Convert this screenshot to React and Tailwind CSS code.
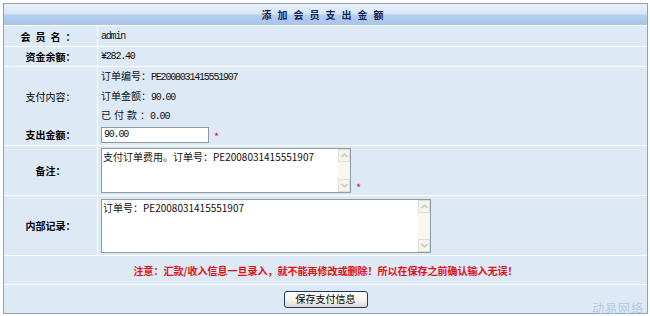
import React from 'react';

const cn = "font-['Noto_Sans_CJK_SC',sans-serif]";
const mono = "font-['Liberation_Mono',monospace] tracking-[-1.2px]";

// 禁用状态的滚动条（XP 风格）
function Scrollbar() {
  return (
    <div className="flex w-[12px] flex-col justify-between bg-[#f7f6f0]">
      <div className="flex h-[13px] items-center justify-center border border-[#e2e0d6] bg-[#f4f3ee]">
        <svg width="7" height="5" viewBox="0 0 7 5"><path d="M0.5 4 L3.5 1 L6.5 4" fill="none" stroke="#c3c1b8" strokeWidth="1.2" /></svg>
      </div>
      <div className="flex h-[13px] items-center justify-center border border-[#e2e0d6] bg-[#f4f3ee]">
        <svg width="7" height="5" viewBox="0 0 7 5"><path d="M0.5 1 L3.5 4 L6.5 1" fill="none" stroke="#c3c1b8" strokeWidth="1.2" /></svg>
      </div>
    </div>
  );
}

function Area({ value, className }) {
  return (
    <div className={`flex border border-[#8d99a5] bg-white ${className}`}>
      <textarea
        readOnly
        defaultValue={value}
        className={`flex-1 resize-none overflow-hidden bg-white px-[1px] py-[1px] text-[10px] leading-[13px] text-[#111] outline-none ${cn}`}
      />
      <Scrollbar />
    </div>
  );
}

function Row({ label, bold = true, h, children }) {
  return (
    <div className="grid grid-cols-[93px_1fr] gap-px" style={{ height: h }}>
      <div className={`flex items-center justify-center bg-[#dde9f5] text-[10px] text-black ${bold ? 'font-bold' : ''}`}>
        {label}
      </div>
      <div className="flex items-center bg-[#dde9f5] pl-[3px] text-[10px] text-[#111]">{children}</div>
    </div>
  );
}

export default function App() {
  return (
    <div className={`relative h-[316px] w-[650px] bg-white pt-[3px] pl-[3px] ${cn}`}>
      <div className="flex w-[645px] flex-col gap-px border border-[#8fa2b6] bg-white">
        <div className="flex h-[21px] items-center justify-center bg-[linear-gradient(to_bottom,#eaf2fb_0%,#d8e6f6_45%,#b4cef0_55%,#a8c5ec_100%)]">
          <span className="text-[10px] font-bold tracking-[6px] text-[#14285a]">添加会员支出金额</span>
        </div>

        <Row label={<span className="tracking-[5px]">会员名：</span>} h={20}>
          <span className={mono}>admin</span>
        </Row>
        <Row label="资金余额：" h={19}>
          <span className={mono}>¥282.40</span>
        </Row>
        <Row label="支付内容：" bold={false} h={56}>
          <div className="flex flex-col leading-[17.5px]">
            <div>订单编号：<span className={mono}>PE2008031415551907</span></div>
            <div>订单金额：<span className={mono}>90.00</span></div>
            <div><span className="tracking-[3px]">已付款</span>：<span className={mono}>0.00</span></div>
          </div>
        </Row>
        <Row label="支出金额：" h={21}>
          <input
            readOnly
            defaultValue="90.00"
            className={`h-[16px] w-[108px] border border-[#8d99a5] bg-white px-[2px] text-[10px] text-[#111] outline-none ${mono}`}
          />
          <span className="ml-[5px] mt-[3px] text-[11px] text-[#e02020]">*</span>
        </Row>
        <Row label="备注：" h={49}>
          <div className="flex items-end">
            <Area value="支付订单费用。订单号：PE2008031415551907" className="h-[45px] w-[250px]" />
            <span className="ml-[5px] text-[11px] leading-[12px] text-[#e02020]">*</span>
          </div>
        </Row>
        <Row label="内部记录：" h={59}>
          <Area value="订单号：PE2008031415551907" className="h-[54px] w-[330px]" />
        </Row>

        <div className="flex h-[28px] items-center justify-center bg-[#dde9f5]">
          <span className="text-[10px] font-bold text-[#e01010]">
            注意：汇款/收入信息一旦录入，就不能再修改或删除！所以在保存之前确认输入无误！
          </span>
        </div>
        <div className="flex h-[28px] items-center justify-center bg-[#dde9f5]">
          <button className="h-[17px] w-[84px] rounded-[3px] border border-[#1d3b6e] bg-[linear-gradient(to_bottom,#ffffff,#f2f1ea_60%,#dcdad0)] text-[10px] leading-[14px] text-black">
            保存支付信息
          </button>
        </div>
      </div>

      <span className="absolute right-[6px] bottom-[1px] text-[12px] leading-[14px] tracking-[1px] text-[#b3cbe6]">动易网络</span>
    </div>
  );
}
